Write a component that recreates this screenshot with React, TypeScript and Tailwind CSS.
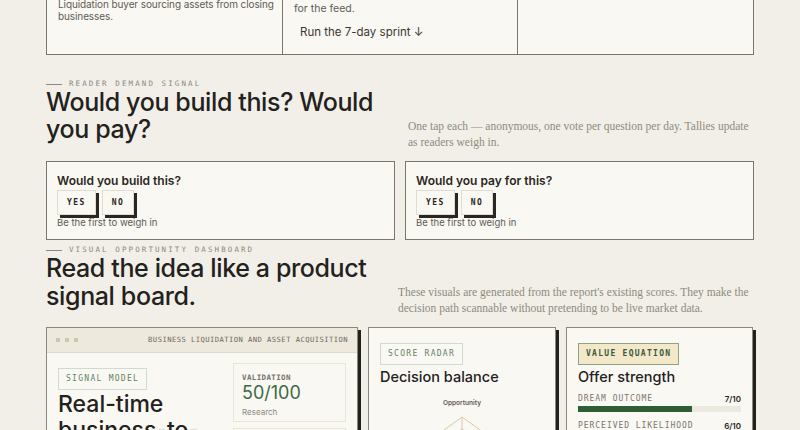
import React from 'react';

const sans = "font-['Inter','Noto_Sans',sans-serif]";
const mono = "font-['DejaVu_Sans_Mono','Liberation_Mono',monospace]";
const serif = "font-['Liberation_Serif','DejaVu_Serif',serif]";

function Eyebrow({ label }: { label: string }) {
  return (
    <div className="flex items-center gap-[7px] h-[12px]">
      <span className="w-[16px] h-px bg-[#8d887b]" />
      <span className={`${mono} text-[7.5px] tracking-[0.28em] uppercase text-[#8d887b]`}>{label}</span>
    </div>
  );
}

function VoteButton({ label }: { label: string }) {
  return (
    <button className={`${mono} h-[25px] px-[9px] bg-[#faf8f3] border border-[#e1dccf] shadow-[3px_3px_0_#2a2722] text-[8px] font-bold tracking-[0.18em] text-[#2a2722]`}>
      {label}
    </button>
  );
}

function PollCard({ question }: { question: string }) {
  return (
    <div className="border border-[#7a766d] bg-[#faf8f3] px-[10px] pt-[11px] pb-[9px]">
      <p className={`${sans} text-[12px] leading-[16px] font-semibold text-[#2a2722]`}>{question}</p>
      <div className="flex gap-[6px] mt-[1px]">
        <VoteButton label="YES" />
        <VoteButton label="NO" />
      </div>
      <p className={`${sans} text-[9.5px] leading-[14px] text-[#5e5b55] mt-[1px]`}>Be the first to weigh in</p>
    </div>
  );
}

function Chip({ label, tone }: { label: string; tone: 'plain' | 'gold' }) {
  const look =
    tone === 'gold'
      ? 'bg-[#f4e8cb] border-[#8aa580] text-[#3a5c3a] font-bold'
      : 'bg-transparent border-[#cfdccf] text-[#5f8463]';
  return (
    <span className={`${mono} inline-flex items-center h-[22px] px-[7px] border text-[8px] tracking-[0.16em] ${look}`}>
      {label}
    </span>
  );
}

function ScoreBar({ label, score }: { label: string; score: number }) {
  return (
    <div>
      <div className="flex justify-between items-center h-[12px]">
        <span className={`${mono} text-[8px] tracking-[0.12em] text-[#7a766c]`}>{label}</span>
        <span className={`${sans} text-[8px] font-semibold text-[#2a2722]`}>{score}/10</span>
      </div>
      <div className="mt-[1px] h-[6px] bg-[#ece9df]">
        <div className="h-full bg-[#2e5e36]" style={{ width: `${score * 10}%` }} />
      </div>
    </div>
  );
}

export default function App(): React.JSX.Element {
  return (
    <div className={`min-h-screen bg-[#f2efe8] overflow-hidden ${sans}`}>
      <div className="mx-auto w-[708px]">
        {/* Tail of the idea summary card */}
        <div className="-mt-[30px] grid grid-cols-[236px_235px_1fr] border border-[#7a766d] bg-[#faf8f3] h-[85px]">
          <div className="pl-[11px] pr-[2px] pt-[15px] border-r border-[#7a766d]">
            <p className="text-[10px] leading-[12px] tracking-[-0.01em] text-[#5e5b55]">
              Who it serves:
              <br />
              Liquidation buyer sourcing assets from closing businesses.
            </p>
          </div>
          <div className="px-[11px] pt-[14px] border-r border-[#7a766d]">
            <p className="text-[10.5px] leading-[16px] text-[#5e5b55]">
              Daily build notes, logged and published
              <br />
              for the feed.
            </p>
            <p className="mt-[7px] ml-[6px] text-[11.5px] leading-[16px] text-[#3a3731]">Run the 7-day sprint ↓</p>
          </div>
          <div />
        </div>

        {/* Reader demand */}
        <div className="mt-[23px]">
          <Eyebrow label="Reader demand signal" />
          <div className="flex items-end -mt-[1px]">
            <h2 className="w-[352px] text-[25px] leading-[27px] font-medium tracking-[-0.015em] text-[#23211c]">
              Would you build this? Would you pay?
            </h2>
            <p className={`${serif} flex-1 pl-[10px] -mb-[7px] text-[11.5px] leading-[16px] text-[#8f8a7d]`}>
              One tap each — anonymous, one vote per question per day. Tallies update as readers weigh in.
            </p>
          </div>
          <div className="mt-[18px] grid grid-cols-2 gap-[10px]">
            <PollCard question="Would you build this?" />
            <PollCard question="Would you pay for this?" />
          </div>
        </div>

        {/* Visual dashboard */}
        <div className="mt-[4px]">
          <Eyebrow label="Visual opportunity dashboard" />
          <div className="flex items-end -mt-[2px]">
            <h2 className="w-[342px] text-[25px] leading-[28px] font-medium tracking-[-0.015em] text-[#23211c]">
              Read the idea like a product signal board.
            </h2>
            <p className={`${serif} flex-1 pl-[10px] -mb-[6px] text-[11.5px] leading-[16px] text-[#8f8a7d]`}>
              These visuals are generated from the report's existing scores. They make the decision path scannable without pretending to be live market data.
            </p>
          </div>

          <div className="mt-[17px] grid grid-cols-[312px_188px_187px] gap-[10px] items-start">
            {/* Signal model */}
            <div className="border border-[#8a877d] bg-[#faf8f3] shadow-[3px_3px_0_#23211c] h-[160px]">
              <div className="h-[25px] flex items-center justify-between px-[9px] bg-[#ede9dd] border-b border-[#e0dbcd]">
                <div className="flex gap-[5px]">
                  <span className="w-[4px] h-[4px] bg-[#cdc6b0]" />
                  <span className="w-[4px] h-[4px] bg-[#cdc6b0]" />
                  <span className="w-[4px] h-[4px] bg-[#cdc6b0]" />
                </div>
                <span className={`${mono} text-[7.2px] tracking-[0.06em] text-[#6f6b61]`}>
                  BUSINESS LIQUIDATION AND ASSET ACQUISITION
                </span>
              </div>
              <div className="flex justify-between px-[11px] pt-[10px]">
                <div>
                  <Chip label="SIGNAL MODEL" tone="plain" />
                  <h3 className="mt-[1px] w-[160px] text-[23px] leading-[26px] font-medium text-[#23211c]">
                    Real-time business-to-buyer matching
                  </h3>
                </div>
                <div className="flex flex-col gap-[6px]">
                  <div className="w-[113px] h-[59px] border border-[#ebe5d5] px-[8px] pt-[8px]">
                    <p className={`${mono} text-[7.5px] tracking-[0.05em] font-bold text-[#77736a]`}>VALIDATION</p>
                    <p className="text-[18px] leading-[20px] text-[#3b6b42]">50/100</p>
                    <p className="mt-[3px] text-[8px] text-[#8d887b]">Research</p>
                  </div>
                  <div className="w-[113px] h-[59px] border border-[#ebe5d5]" />
                </div>
              </div>
            </div>

            {/* Score radar */}
            <div className="border border-[#8a877d] bg-[#faf8f3] shadow-[3px_3px_0_#23211c] px-[11px] pt-[10px] h-[160px]">
              <Chip label="SCORE RADAR" tone="plain" />
              <h3 className="mt-[3px] text-[14.5px] leading-[18px] font-medium text-[#23211c]">Decision balance</h3>
              <p className="mt-[13px] text-center text-[6.5px] font-semibold text-[#5e5b55]">Opportunity</p>
              <svg width="165" height="60" viewBox="0 0 165 60" className="mt-[7px]">
                <g fill="none" stroke="#d9c9a6" strokeWidth="1">
                  <polygon points="82,1 145,46 120,120 45,120 20,46" />
                  <polygon points="82,13 132,48 112,110 53,110 32,48" />
                  <line x1="82" y1="1" x2="82" y2="60" />
                  <line x1="82" y1="60" x2="145" y2="46" />
                  <line x1="82" y1="60" x2="20" y2="46" />
                </g>
              </svg>
            </div>

            {/* Value equation */}
            <div className="border border-[#8a877d] bg-[#faf8f3] shadow-[3px_3px_0_#23211c] px-[11px] pt-[10px] h-[160px]">
              <Chip label="VALUE EQUATION" tone="gold" />
              <h3 className="mt-[3px] text-[14.5px] leading-[18px] font-medium text-[#23211c]">Offer strength</h3>
              <div className="mt-[7px] flex flex-col gap-[8px]">
                <ScoreBar label="DREAM OUTCOME" score={7} />
                <ScoreBar label="PERCEIVED LIKELIHOOD" score={6} />
              </div>
            </div>
          </div>
        </div>
      </div>
    </div>
  );
}
